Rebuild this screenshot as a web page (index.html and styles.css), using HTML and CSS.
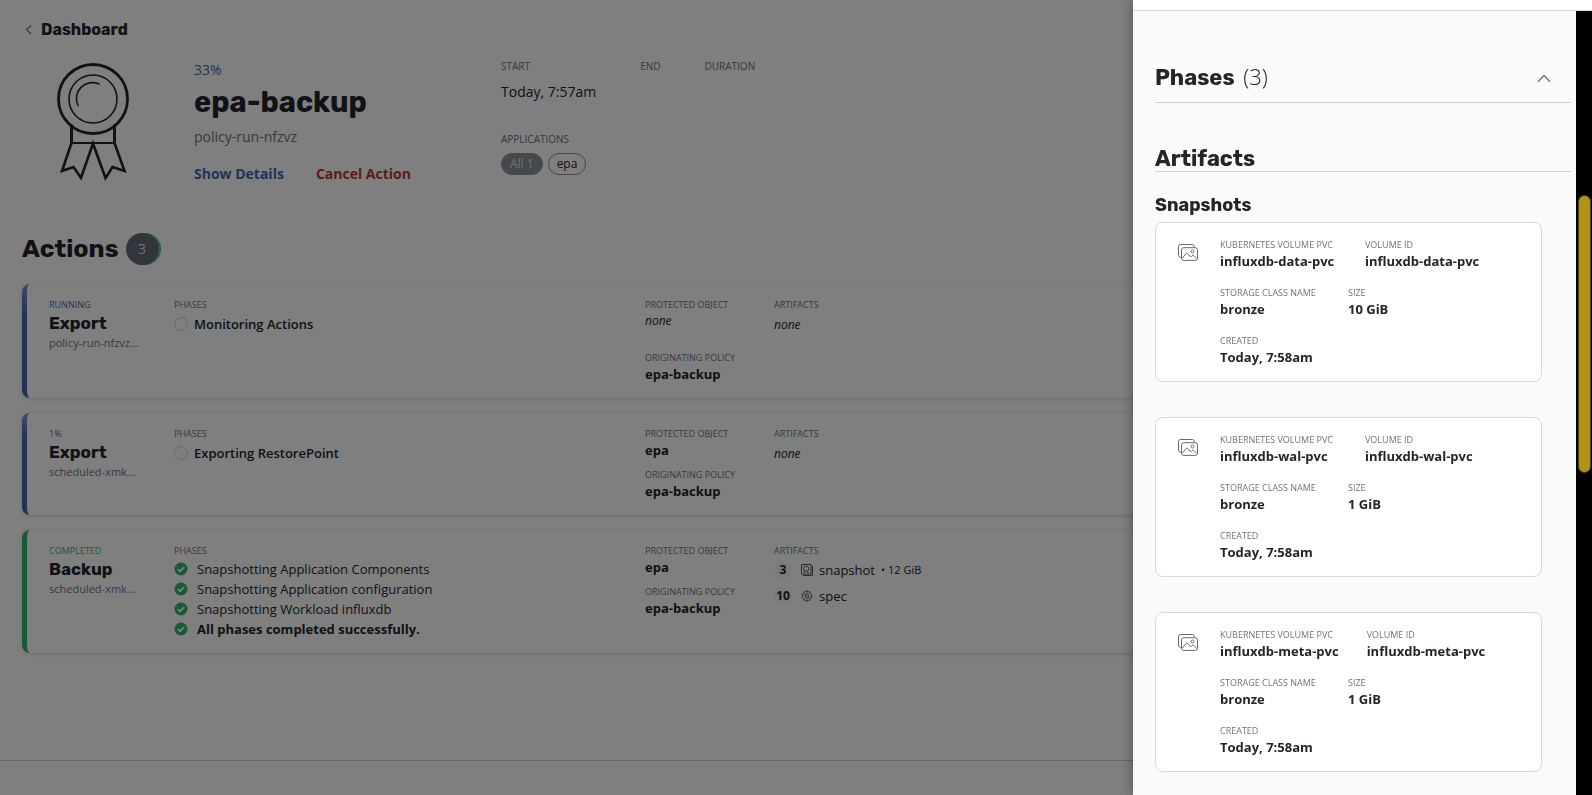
FILE: index.html
```html
<!DOCTYPE html>
<html lang="en">
<head>
<meta charset="utf-8">
<title>epa-backup</title>
<link rel="stylesheet" href="styles.css">
</head>
<body>
<svg class="defs" aria-hidden="true">
  <symbol id="check" viewBox="0 0 14 14"><circle cx="7" cy="7" r="6.5" fill="#31b56b"/><path d="M4 7.2l2.1 2.1L10.2 5" fill="none" stroke="#fff" stroke-width="1.7"/></symbol>
  <symbol id="pending" viewBox="0 0 14 14"><circle cx="7" cy="7" r="6.2" fill="none" stroke="#8fb3c6" stroke-width="1" stroke-dasharray="1.6 1.3"/></symbol>
  <symbol id="images" viewBox="0 0 20 17"><g fill="none" stroke="#666b70" stroke-width="1"><path d="M3.5 13.4h-.8A2.2 2.2 0 0 1 .5 11.200V2.700A2.200 2.200 0 0 1 2.700.5h11.400a2.200 2.200 0 0 1 2.200 2.200v.8"/><rect x="3.500" y="3.700" width="16" height="12.700" rx="2.200"/><path d="M4.200 14.200l3.900-4.700q.8-.9 1.600 0l2.900 3.500 1.500-1.500q.8-.8 1.600 0l3 2.900"/><circle cx="14.500" cy="7.500" r="1.500"/></g></symbol>
</svg>

<main class="page">
  <a class="back" href="#dashboard">
    <svg width="8" height="12" viewBox="0 0 8 12" aria-hidden="true"><path d="M6 1.500L1.500 5.800 6 10" fill="none" stroke="#6b7178" stroke-width="1.200"/></svg>
    Dashboard
  </a>

  <header class="summary">
    <svg class="medal" width="72" height="118" viewBox="0 0 72 118" aria-hidden="true">
      <g fill="none" stroke="#20242a" stroke-linejoin="round" stroke-linecap="round">
        <circle cx="36" cy="36" r="34.500" stroke-width="2.800"/>
        <circle cx="36" cy="36" r="24" stroke-width="1.600"/>
        <path d="M21 42.500A16 16 0 0 1 42 21" stroke-width="1.600"/>
        <path d="M14.500 62.500V80M57.500 62.500V80" stroke-width="3"/>
        <path d="M14.500 80h43" stroke-width="2"/>
        <path d="M14.500 80L5 108l11.500-4 7.500 11L36 80.500 48.500 115l7-11 12 4L57.500 80" stroke-width="2.600" stroke-linejoin="miter"/>
      </g>
    </svg>
    <div class="identity">
      <span class="percent">33%</span>
      <h1 class="title">epa-backup</h1>
      <span class="run">policy-run-nfzvz</span>
      <div class="buttons">
        <button class="link-btn" type="button">Show Details</button>
        <button class="link-btn danger" type="button">Cancel Action</button>
      </div>
    </div>
    <div class="facts">
      <div class="times">
        <div class="time"><span class="fact-label">START</span><span class="fact-value">Today, 7:57am</span></div>
        <div class="time"><span class="fact-label">END</span></div>
        <div class="time"><span class="fact-label">DURATION</span></div>
      </div>
      <span class="fact-label">APPLICATIONS</span>
      <div class="pills">
        <button class="pill all" type="button">All 1</button>
        <button class="pill" type="button">epa</button>
      </div>
    </div>
  </header>

  <h2 class="actions-head">Actions <span class="count">3</span></h2>

  <section class="actions">
    <article class="action">
      <div><span class="label blue">RUNNING</span><h3 class="name">Export</h3><span class="ref">policy-run-nfzvz...</span></div>
      <div><span class="label">PHASES</span><p class="phase now"><svg class="mark" aria-hidden="true"><use href="#pending"/></svg>Monitoring Actions</p></div>
      <div class="objects spread"><span class="label">PROTECTED OBJECT</span><em class="none">none</em><span class="label">ORIGINATING POLICY</span><strong class="value">epa-backup</strong></div>
      <div><span class="label">ARTIFACTS</span><em class="none low">none</em></div>
    </article>
    <article class="action">
      <div><span class="label blue">1%</span><h3 class="name">Export</h3><span class="ref">scheduled-xmk...</span></div>
      <div><span class="label">PHASES</span><p class="phase now"><svg class="mark" aria-hidden="true"><use href="#pending"/></svg>Exporting RestorePoint</p></div>
      <div class="objects"><span class="label">PROTECTED OBJECT</span><strong class="value">epa</strong><span class="label">ORIGINATING POLICY</span><strong class="value">epa-backup</strong></div>
      <div><span class="label">ARTIFACTS</span><em class="none low">none</em></div>
    </article>
    <article class="action done">
      <div><span class="label green">COMPLETED</span><h3 class="name">Backup</h3><span class="ref">scheduled-xmk...</span></div>
      <div><span class="label">PHASES</span>
        <ul class="phases">
          <li class="phase"><svg class="mark" aria-hidden="true"><use href="#check"/></svg>Snapshotting Application Components</li>
          <li class="phase"><svg class="mark" aria-hidden="true"><use href="#check"/></svg>Snapshotting Application configuration</li>
          <li class="phase"><svg class="mark" aria-hidden="true"><use href="#check"/></svg>Snapshotting Workload influxdb</li>
          <li class="phase final"><svg class="mark" aria-hidden="true"><use href="#check"/></svg>All phases completed successfully.</li>
        </ul>
      </div>
      <div class="objects"><span class="label">PROTECTED OBJECT</span><strong class="value">epa</strong><span class="label">ORIGINATING POLICY</span><strong class="value">epa-backup</strong></div>
      <div><span class="label">ARTIFACTS</span>
        <ul class="artifacts">
          <li class="artifact"><span class="tally">3</span>
            <svg width="12" height="12" viewBox="0 0 12 12" aria-hidden="true"><g fill="none" stroke="#555a60"><path d="M.5.5h9.500v9.500H.5zM2 11.500h9.500V2"/><circle cx="5.200" cy="4.700" r="2.600"/><path d="M3 9l1.500-2M7.500 9L6 7"/></g></svg>
            snapshot <small class="size">• 12 GiB</small></li>
          <li class="artifact"><span class="tally">10</span>
            <svg width="12" height="12" viewBox="0 0 12 12" aria-hidden="true"><g fill="none" stroke="#6a6f75"><circle cx="6" cy="6" r="4.700"/><circle cx="6" cy="6" r="1.500"/><path d="M6 0v4.500M6 7.500V12M.3 4.300l4.200 1.200M7.500 6.500l4.200 1.200M2.300 10.700l2.700-3.500M7 4.800l2.700-3.500M2.300 1.300L5 4.800M7 7.200l2.700 3.500" stroke-width=".7"/></g></svg>
            spec</li>
        </ul>
      </div>
    </article>
  </section>
  <footer class="foot"></footer>
</main>

<div class="overlay"></div>

<aside class="drawer" aria-label="Action details">
  <div class="drawer-top"></div>
  <div class="drawer-main">
    <div class="drawer-body">
      <h2 class="section-head phases-head"><span>Phases <span class="num">(3)</span></span>
        <button class="collapse" type="button" aria-label="Collapse phases"><svg width="14" height="9" viewBox="0 0 14 9" aria-hidden="true"><path d="M1 7.800L7 1.500l6 6.300" fill="none" stroke="#6c757d" stroke-width="1.400"/></svg></button>
      </h2>
      <h2 class="section-head artifacts-head">Artifacts</h2>
      <h3 class="sub-head">Snapshots</h3>
      <div class="snaps">
        <article class="snap">
          <svg class="snap-icon" aria-hidden="true"><use href="#images"/></svg>
          <div class="fields">
            <div class="row"><div class="volume"><span class="label">KUBERNETES VOLUME PVC</span><strong class="value">influxdb-data-pvc</strong></div><div><span class="label">VOLUME ID</span><strong class="value">influxdb-data-pvc</strong></div></div>
            <div class="row"><div class="storage"><span class="label">STORAGE CLASS NAME</span><strong class="value">bronze</strong></div><div><span class="label">SIZE</span><strong class="value">10 GiB</strong></div></div>
            <div class="row"><div><span class="label">CREATED</span><strong class="value">Today, 7:58am</strong></div></div>
          </div>
        </article>
        <article class="snap">
          <svg class="snap-icon" aria-hidden="true"><use href="#images"/></svg>
          <div class="fields">
            <div class="row"><div class="volume"><span class="label">KUBERNETES VOLUME PVC</span><strong class="value">influxdb-wal-pvc</strong></div><div><span class="label">VOLUME ID</span><strong class="value">influxdb-wal-pvc</strong></div></div>
            <div class="row"><div class="storage"><span class="label">STORAGE CLASS NAME</span><strong class="value">bronze</strong></div><div><span class="label">SIZE</span><strong class="value">1 GiB</strong></div></div>
            <div class="row"><div><span class="label">CREATED</span><strong class="value">Today, 7:58am</strong></div></div>
          </div>
        </article>
        <article class="snap">
          <svg class="snap-icon" aria-hidden="true"><use href="#images"/></svg>
          <div class="fields">
            <div class="row"><div class="volume"><span class="label">KUBERNETES VOLUME PVC</span><strong class="value">influxdb-meta-pvc</strong></div><div><span class="label">VOLUME ID</span><strong class="value">influxdb-meta-pvc</strong></div></div>
            <div class="row"><div class="storage"><span class="label">STORAGE CLASS NAME</span><strong class="value">bronze</strong></div><div><span class="label">SIZE</span><strong class="value">1 GiB</strong></div></div>
            <div class="row"><div><span class="label">CREATED</span><strong class="value">Today, 7:58am</strong></div></div>
          </div>
        </article>
      </div>
    </div>
    <div class="track" aria-hidden="true"><div class="thumb"></div></div>
  </div>
</aside>
</body>
</html>
```

FILE: styles.css
```css
* { box-sizing: border-box; margin: 0; padding: 0; }
html, body { height: 100%; overflow: hidden; }
body { font-family: "Open Sans", "Noto Sans", sans-serif; font-size: 13px; line-height: 18px; color: #20242a; background: #fff; }
h1, h2, h3 { font-family: Rubik, Inter, "Open Sans", sans-serif; font-weight: 700; }
button { font: inherit; background: none; border: 0; cursor: pointer; }
ul { list-style: none; }
.defs { display: none; }

.page { min-height: 100%; display: flex; flex-direction: column; padding: 20px 22px 0; background: #fefefe; }
.back { display: flex; align-items: center; gap: 8px; padding-left: 3px; align-self: flex-start; color: #20242a; text-decoration: none; font: 700 16px/20px Rubik, Inter, sans-serif; }

.summary { display: flex; margin-top: 20px; height: 134px; }
.medal { margin: 3px 65px 0 35px; flex: none; }
.identity { width: 307px; flex: none; display: flex; flex-direction: column; }
.percent { font-size: 14px; line-height: 20px; color: #4268b0; }
.title { font-size: 29px; line-height: 36px; margin-top: 4px; }
.run { font-size: 14px; line-height: 20px; color: #6c757d; margin-top: 7px; }
.buttons { display: flex; gap: 32px; margin-top: 17px; }
.link-btn { font-size: 14px; line-height: 20px; font-weight: 700; color: #4268b0; }
.danger { color: #bc382e; }
.facts { display: flex; flex-direction: column; margin-top: -1px; }
.times { display: flex; gap: 44px; height: 73px; }
.time { display: flex; flex-direction: column; gap: 9px; }
.fact-label { font-size: 10px; line-height: 14px; color: #6c757d; }
.fact-value { font-size: 14px; line-height: 20px; }
.pills { display: flex; gap: 5px; margin-top: 7px; }
.pill { height: 22px; padding: 0 8px; border: 1px solid #8a919a; border-radius: 11px; font-size: 12px; line-height: 20px; color: #20242a; }
.all { background: #8a919a; color: #dde1e6; }

.actions-head { display: flex; align-items: center; gap: 7px; margin-top: 39px; font-size: 25px; line-height: 32px; }
.count { width: 33px; height: 32px; border-radius: 16px; background: #646a73; color: #dde1e6; text-align: center; font: 400 14px/32px "Open Sans", sans-serif; box-shadow: 1px 0 0 #8fb3e0, 2px 0 0 #31b56b; }

.actions { display: flex; flex-direction: column; gap: 15px; margin-top: 19px; }
.action { display: grid; grid-template-columns: 125px 471px 129px 1fr; padding: 14px 0 14px 22px; border-left: 5px solid transparent; border-radius: 8px; background: linear-gradient(#fff, #fff) padding-box, linear-gradient(#7f9bd0, #4268b0 25%) border-box; box-shadow: 0 1px 4px rgba(0, 0, 0, .14); }
.done { background: linear-gradient(#fff, #fff) padding-box, #31b56b border-box; }
.label { display: block; font-size: 9px; line-height: 13px; color: #6c757d; white-space: nowrap; }
.blue { color: #4268b0; }
.green { color: #31b56b; }
.name { font-size: 17px; line-height: 20px; margin-top: 2px; }
.ref { display: block; font-size: 11px; line-height: 18px; color: #6c757d; margin-top: 1px; }
.value { display: block; font-size: 13px; line-height: 20px; font-weight: 700; white-space: nowrap; }
.none { display: block; font-size: 12px; line-height: 18px; }
.low { margin-top: 5px; }
.objects .value + .label { margin-top: 8px; }
.spread .none { margin: 1px 0 21px; }
.phase { display: flex; align-items: center; gap: 9px; height: 20px; }
.now { gap: 6px; margin-top: 3px; font-weight: 600; }
.final { font-weight: 700; }
.mark { width: 14px; height: 14px; flex: none; }
.phases { margin-top: 2px; }
.artifacts { display: flex; flex-direction: column; gap: 8px; margin-top: 4px; }
.artifact { display: flex; align-items: center; gap: 6px; height: 18px; }
.tally { width: 18px; height: 18px; margin-right: 3px; border-radius: 9px; background: #f6f6f7; text-align: center; font-size: 12px; font-weight: 700; }
.size { font-size: 11px; }
.foot { margin: auto -22px 0; height: 35px; border-top: 1px solid #d0d0d0; }

.overlay { position: fixed; inset: 0; background: rgba(0, 0, 0, .5); }

.drawer { position: fixed; top: 0; right: 0; bottom: 0; width: 459px; display: flex; flex-direction: column; background: #fafafa; box-shadow: 0 0 12px rgba(0, 0, 0, .4); color: #22262b; }
.drawer-top { height: 11px; flex: none; background: #fff; border-bottom: 1px solid #d3d4d5; }
.drawer-main { flex: 1; min-height: 0; display: flex; }
.drawer-body { flex: 1; min-width: 0; overflow: hidden; padding: 49px 5px 0 22px; }
.section-head { font-size: 22px; line-height: 30px; border-bottom: 1px solid #d0d1d3; }
.phases-head { display: flex; justify-content: space-between; align-items: center; padding: 3px 20px 9px 0; }
.num { margin-left: 4px; font-family: "Open Sans", sans-serif; font-weight: 300; line-height: 20px; }
.collapse { display: flex; }
.artifacts-head { margin-top: 43px; line-height: 25px; }
.sub-head { font-size: 18px; line-height: 24px; margin-top: 21px; }
.snaps { display: flex; flex-direction: column; gap: 35px; margin: 5px 29px 0 0; }
.snap { display: flex; gap: 22px; padding: 15px 22px 14px; border: 1px solid #d8d9db; border-radius: 8px; background: #fff; }
.snap-icon { width: 20px; height: 17px; margin-top: 6px; flex: none; }
.fields { display: flex; flex-direction: column; gap: 15px; }
.row { display: flex; gap: 28px; }
.volume { min-width: 117px; }
.storage { min-width: 100px; }
.track { width: 16px; flex: none; background: #000; padding: 184px 1px 0 2px; }
.thumb { height: 278px; border: 1px solid #4a4009; border-radius: 7px; background: #ae9314; }
```
